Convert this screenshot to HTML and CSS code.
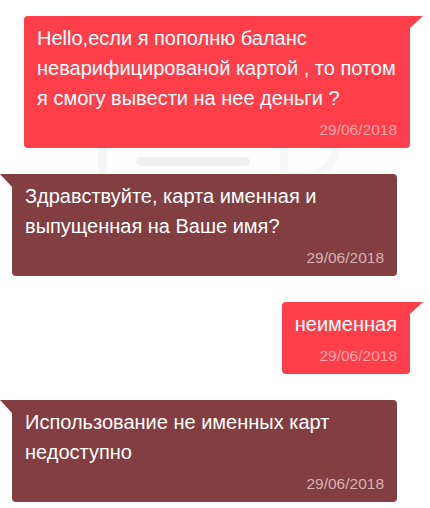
FILE: index.html
```html
<!DOCTYPE html>
<html lang="ru">
<head>
<meta charset="utf-8">
<title>Чат</title>
<link rel="stylesheet" href="styles.css">
</head>
<body>
<div class="chat">
  <svg class="chat-bg" width="430" height="508" viewBox="0 0 430 508" aria-hidden="true">
    <rect x="98" y="120" width="9" height="80" rx="3" fill="#f6f6f6"/>
    <rect x="136" y="157" width="114" height="9" rx="4.5" fill="#f1f1f1"/>
    <path d="M284 120 V176 H300 Q336 176 336 140 V120" fill="none" stroke="#f7f7f7" stroke-width="8"/>
  </svg>

  <div class="msg msg-out">
    <p class="msg-text">Hello,если я пополню баланс неварифицированой картой , то потом я смогу вывести на нее деньги ?</p>
    <div class="msg-date">29/06/2018</div>
  </div>

  <div class="msg msg-in">
    <p class="msg-text">Здравствуйте, карта именная и выпущенная на Ваше имя?</p>
    <div class="msg-date">29/06/2018</div>
  </div>

  <div class="msg msg-out">
    <p class="msg-text">неименная</p>
    <div class="msg-date">29/06/2018</div>
  </div>

  <div class="msg msg-in">
    <p class="msg-text">Использование не именных карт недоступно</p>
    <div class="msg-date">29/06/2018</div>
  </div>
</div>
</body>
</html>
```

FILE: styles.css
```css
html, body {
  margin: 0;
  padding: 0;
  background: #ffffff;
}

body {
  font-family: "Liberation Sans", Arial, sans-serif;
  width: 430px;
  height: 508px;
  overflow: hidden;
}

.chat {
  position: relative;
  display: flex;
  flex-direction: column;
  gap: 26px;
  padding: 16px 20px 0 12px;
}

/* faint logo behind the conversation */
.chat-bg {
  position: absolute;
  left: 0;
  top: 0;
  z-index: 0;
}

.msg {
  position: relative;
  z-index: 1;
  max-width: 386px;
  box-sizing: border-box;
  padding: 7px 13px 8px;
  border-radius: 4px;
  color: #ffffff;
}

.msg-text {
  margin: 0;
  font-size: 20px;
  line-height: 30px;
}

.msg-date {
  margin-top: 7px;
  font-size: 15.5px;
  line-height: 20px;
  text-align: right;
}

/* outgoing: red, tail on the top right */
.msg-out {
  align-self: flex-end;
  background: #fc3f4a;
  border-top-right-radius: 0;
}

.msg-out .msg-date {
  color: #fba4a9;
}

.msg-out::after {
  content: "";
  position: absolute;
  top: 0;
  right: -13px;
  border-top: 12px solid #fc3f4a;
  border-right: 13px solid transparent;
}

/* incoming: dark red, tail on the top left */
.msg-in {
  align-self: flex-start;
  max-width: 385px;
  background: #823e40;
  border-top-left-radius: 0;
}

.msg-in .msg-date {
  color: #d8b2b3;
}

.msg-in::after {
  content: "";
  position: absolute;
  top: 0;
  left: -12px;
  border-top: 13px solid #823e40;
  border-left: 12px solid transparent;
}
```
